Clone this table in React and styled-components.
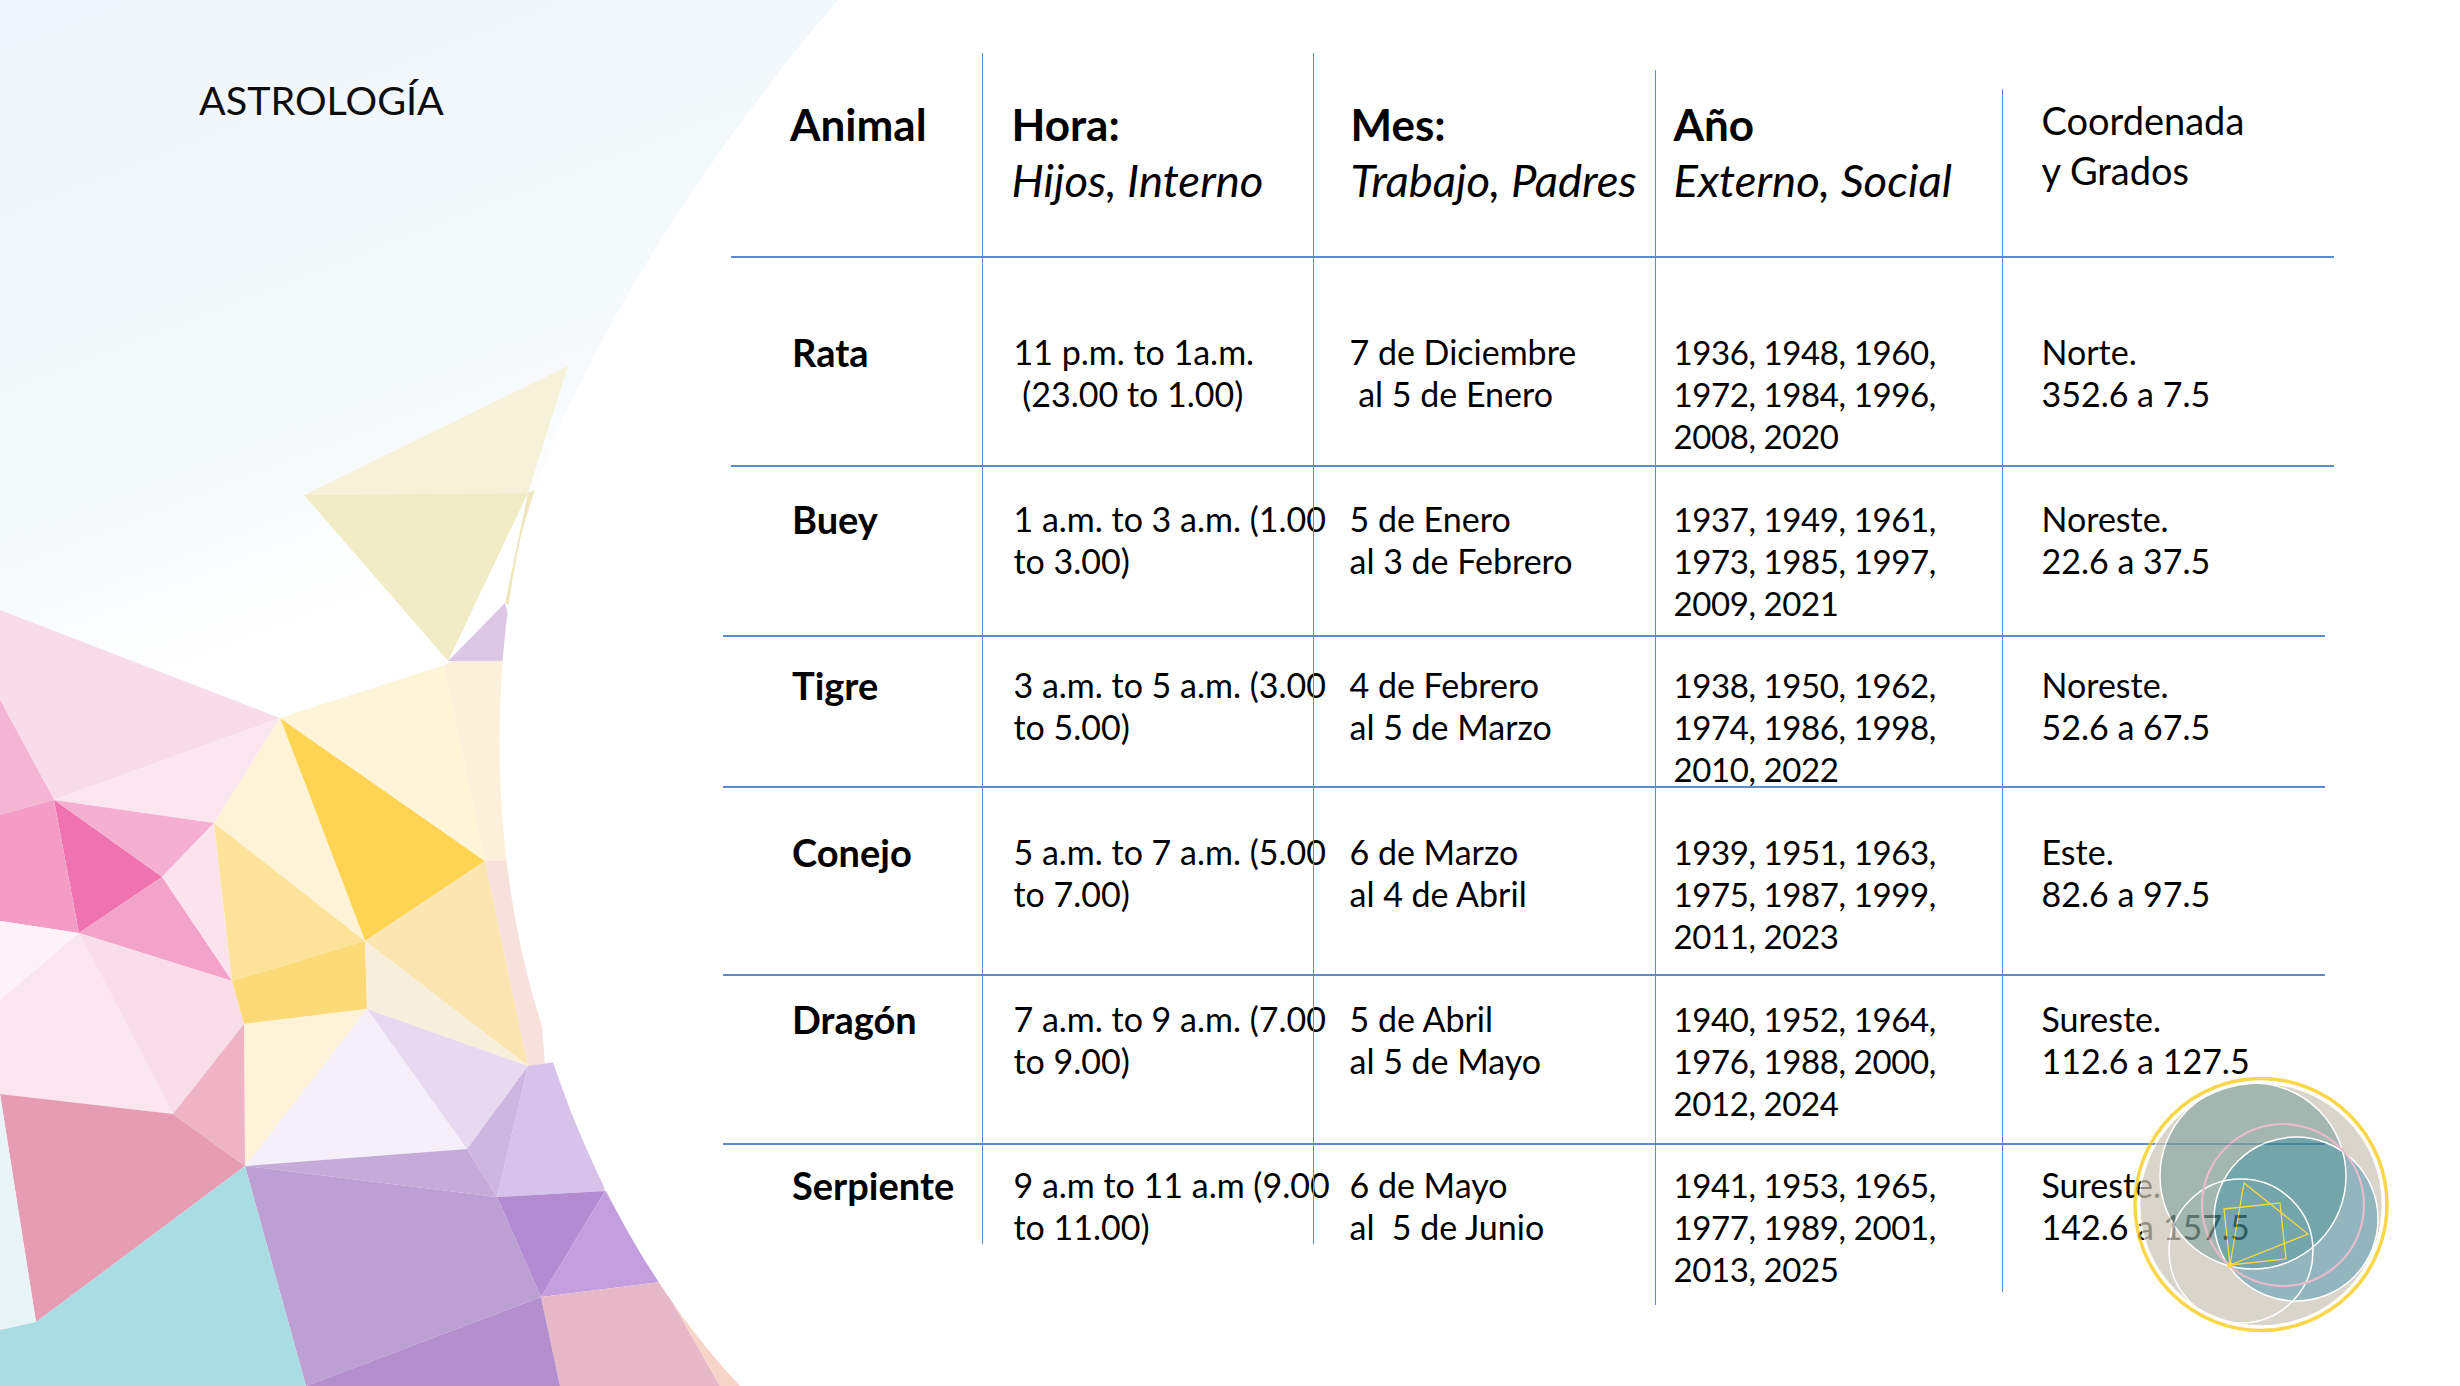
import React from 'react';
import styled, { createGlobalStyle } from 'styled-components';

const GlobalStyle = createGlobalStyle`
  html, body {
    margin: 0;
    padding: 0;
    background: #fff;
  }
  body {
    font-family: Lato, "Open Sans", sans-serif;
    color: #000;
  }
`;

const LINE = '#5b8bd0';
const COLUMNS = '259px 331px 342px 347px 333px';

const Slide = styled.div`
  position: relative;
  width: 2460px;
  height: 1386px;
  overflow: hidden;
  background: #fff;
  display: flex;
  align-items: flex-start;
  padding-left: 199px;
  box-sizing: border-box;
`;

const Backdrop = styled.svg`
  position: absolute;
  left: 0;
  top: 0;
  z-index: 0;
`;

const TitleColumn = styled.div`
  position: relative;
  z-index: 1;
  width: 524px;
  flex-shrink: 0;
  padding-top: 75px;
`;

const Title = styled.h1`
  margin: 0;
  font-family: Lato, sans-serif;
  font-weight: 400;
  font-size: 39.5px;
  line-height: 49px;
  color: #0d0d0d;
`;

const Table = styled.div`
  position: relative;
  z-index: 1;
  margin-top: 53px;
  width: 1612px;
  display: flex;
  flex-direction: column;
`;

const Row = styled.div`
  display: grid;
  grid-template-columns: ${COLUMNS};
  grid-template-rows: 100%;
  height: ${p => p.$h}px;
`;

const Rule = styled.div`
  height: 1.5px;
  background: ${LINE};
  margin-left: ${p => p.$l}px;
  margin-right: ${p => p.$r}px;
`;

const Cell = styled.div`
  box-sizing: border-box;
  min-width: 0;
  padding-top: ${p => p.$pt}px;
  padding-left: ${p => p.$pl}px;
  margin-top: ${p => p.$mt || 0}px;
  border-left: ${p => (p.$first ? 'none' : `1.5px solid ${LINE}`)};
  white-space: pre;
  ${p => p.$h && `align-self: start; height: ${p.$h}px;`}
`;

const HeadLabel = styled.div`
  font-weight: 700;
  font-size: 44px;
  line-height: 56px;
`;

const HeadNote = styled.div`
  font-style: italic;
  font-size: 45.5px;
  line-height: 56px;
`;

const CoordHead = styled.div`
  font-size: 38px;
  line-height: 50px;
`;

const Name = styled.div`
  font-weight: 700;
  font-size: 38px;
  line-height: 42px;
`;

const Body = styled.div`
  font-size: 34px;
  line-height: 42px;
`;

const Years = styled(Body)`
  font-size: 33px;
  letter-spacing: -0.4px;
`;

const Logo = styled.svg`
  position: absolute;
  left: 2133px;
  top: 1077px;
  z-index: 2;
  opacity: 0.72;
`;

const PAD = { name: 69, hora: 30.5, mes: 35.5, ano: 17.5, coord: 38.5 };

const ROWS = [
  {
    name: 'Rata', h: 207.5, pt: 73,
    hora: ['11 p.m. to 1a.m.', ' (23.00 to 1.00)'],
    mes: ['7 de Diciembre', ' al 5 de Enero'],
    ano: ['1936, 1948, 1960,', '1972, 1984, 1996,', '2008, 2020'],
    coord: ['Norte.', '352.6 a 7.5'],
  },
  {
    name: 'Buey', h: 168.5, pt: 31,
    hora: ['1 a.m. to 3 a.m. (1.00', 'to 3.00)'],
    mes: ['5 de Enero', 'al 3 de Febrero'],
    ano: ['1937, 1949, 1961,', '1973, 1985, 1997,', '2009, 2021'],
    coord: ['Noreste.', '22.6 a 37.5'],
  },
  {
    name: 'Tigre', h: 149.5, pt: 27.5,
    hora: ['3 a.m. to 5 a.m. (3.00', 'to 5.00)'],
    mes: ['4 de Febrero', 'al 5 de Marzo'],
    ano: ['1938, 1950, 1962,', '1974, 1986, 1998,', '2010, 2022'],
    coord: ['Noreste.', '52.6 a 67.5'],
  },
  {
    name: 'Conejo', h: 186.5, pt: 43,
    hora: ['5 a.m. to 7 a.m. (5.00', 'to 7.00)'],
    mes: ['6 de Marzo', 'al 4 de Abril'],
    ano: ['1939, 1951, 1963,', '1975, 1987, 1999,', '2011, 2023'],
    coord: ['Este.', '82.6 a 97.5'],
  },
  {
    name: 'Dragón', h: 167.5, pt: 22,
    hora: ['7 a.m. to 9 a.m. (7.00', 'to 9.00)'],
    mes: ['5 de Abril', 'al 5 de Mayo'],
    ano: ['1940, 1952, 1964,', '1976, 1988, 2000,', '2012, 2024'],
    coord: ['Sureste.', '112.6 a 127.5'],
  },
  {
    name: 'Serpiente', h: 160, pt: 19, ends: [99, 99, 160, 147],
    hora: ['9 a.m to 11 a.m (9.00', 'to 11.00)'],
    mes: ['6 de Mayo', 'al  5 de Junio'],
    ano: ['1941, 1953, 1965,', '1977, 1989, 2001,', '2013, 2025'],
    coord: ['Sureste.', '142.6 a 157.5'],
  },
];

// rule insets after header and each row
const RULES = [[8, 1], [8, 1], [0, 10], [0, 10], [0, 10], [0, 10]];

const FACETS = [
  ['M0 610 L280 718 L54 800 L0 800 Z', '#f9dcea'],
  ['M0 700 L54 800 L0 815 Z', '#f4b5d2'],
  ['M54 800 L280 718 L214 823 Z', '#fbe6f0'],
  ['M54 800 L214 823 L162 877 Z', '#f5afd0'],
  ['M54 800 L162 877 L79 933 Z', '#ee73ae'],
  ['M0 815 L54 800 L79 933 L0 921 Z', '#f29cc6'],
  ['M162 877 L214 823 L232 981 Z', '#fbe3ee'],
  ['M79 933 L162 877 L232 981 Z', '#f3a2ca'],
  ['M0 921 L79 933 L0 1000 Z', '#fdf2f7'],
  ['M79 933 L232 981 L244 1024 L173 1114 Z', '#f9dde8'],
  ['M0 1000 L79 933 L173 1114 L0 1094 Z', '#fbe5ee'],
  ['M280 718 L485 861 L365 941 Z', '#ffd452'],
  ['M214 823 L280 718 L365 941 Z', '#fef3d6'],
  ['M214 823 L365 941 L232 981 Z', '#fde39a'],
  ['M232 981 L365 941 L367 1009 L244 1024 Z', '#fdda78'],
  ['M280 718 L444 665 L485 861 Z', '#fef4d8'],
  ['M444 665 L520 630 L530 880 L485 861 Z', '#fdf0da'],
  ['M365 941 L485 861 L528 1066 Z', '#fbe6b2'],
  ['M485 861 L530 860 L545 1066 L528 1066 Z', '#f8e1dc'],
  ['M365 941 L528 1066 L367 1009 Z', '#f8eedc'],
  ['M244 1024 L367 1009 L245 1166 Z', '#fef2d8'],
  ['M367 1009 L467 1149 L245 1166 Z', '#f4eff8'],
  ['M367 1009 L528 1066 L467 1149 Z', '#e6d9f0'],
  ['M528 1066 L570 1060 L605 1191 L497 1197 Z', '#d7c3ea'],
  ['M467 1149 L528 1066 L497 1197 Z', '#cdb6e0'],
  ['M245 1166 L467 1149 L497 1197 Z', '#c5abda'],
  ['M245 1166 L497 1197 L541 1297 L306 1386 Z', '#bc9fd3'],
  ['M497 1197 L605 1191 L541 1297 Z', '#b28bd1'],
  ['M605 1191 L661 1282 L541 1297 Z', '#c39fe0'],
  ['M605 1191 L640 1180 L700 1282 L661 1282 Z', '#d3b6e8'],
  ['M541 1297 L661 1282 L720 1386 L560 1386 Z', '#e7b9c8'],
  ['M661 1282 L720 1282 L780 1386 L720 1386 Z', '#f6d5c8'],
  ['M306 1386 L541 1297 L560 1386 Z', '#b48fcd'],
  ['M0 1094 L173 1114 L245 1166 L36 1322 Z', '#e69cb3'],
  ['M173 1114 L244 1024 L245 1166 Z', '#eeb3c5'],
  ['M0 1094 L36 1322 L0 1330 Z', '#e9f4f6'],
  ['M36 1322 L245 1166 L306 1386 L0 1386 L0 1330 Z', '#a9dce3'],
  ['M304 495 L568 366 L528 493 Z', '#f6f2da'],
  ['M304 495 L528 493 L448 661 Z', '#f2ecc6'],
  ['M528 493 L560 480 L520 610 L505 603 Z', '#efe6bd'],
  ['M448 661 L505 603 L520 661 Z', '#dcc8e6'],
];

function Background() {
  return (
    <Backdrop width="2460" height="1386" viewBox="0 0 2460 1386">
      <defs>
        <linearGradient id="sky" x1="0" y1="0" x2="0.25" y2="1">
          <stop offset="0" stopColor="#eef5fa" />
          <stop offset="0.4" stopColor="#f6fafc" />
          <stop offset="0.5" stopColor="#ffffff" />
        </linearGradient>
      </defs>
      <rect x="0" y="0" width="900" height="1386" fill="url(#sky)" />
      {FACETS.map(([d, fill], i) => (
        <path key={i} d={d} fill={fill} />
      ))}
      <path
        d="M838 0 C700 160 560 380 520 540 C490 680 490 860 540 1020 C580 1160 650 1290 740 1386 L2460 1386 L2460 0 Z"
        fill="#fff"
      />
    </Backdrop>
  );
}

function Emblem() {
  return (
    <Logo width="258" height="258" viewBox="0 0 258 258">
      <defs>
        <clipPath id="greenDisc">
          <circle cx="120" cy="99" r="93" />
        </clipPath>
      </defs>
      <circle cx="128" cy="128" r="121" fill="#cbc5b7" />
      <circle cx="120" cy="99" r="93" fill="#819c93" />
      <circle cx="163" cy="142" r="82" fill="#6a9aa6" />
      <circle cx="163" cy="142" r="82" fill="#3e838a" clipPath="url(#greenDisc)" />
      <circle cx="120" cy="99" r="93" fill="none" stroke="#fff" strokeWidth="1.5" />
      <circle cx="163" cy="142" r="82" fill="none" stroke="#fff" strokeWidth="1.5" />
      <circle cx="108" cy="174" r="72" fill="none" stroke="#fff" strokeWidth="1.5" />
      <circle cx="150" cy="128" r="81" fill="none" stroke="#dfa2b7" strokeWidth="2.2" />
      <path d="M97 188 L111 106 L175 157 Z" fill="none" stroke="#f7c904" strokeWidth="1.3" />
      <path d="M91 132 L147 126 L153 182 L97 188 Z" fill="none" stroke="#f7c904" strokeWidth="1.3" />
      <circle cx="97" cy="188" r="3" fill="#f7c904" />
      <circle cx="128" cy="127.5" r="121.5" fill="none" stroke="#fff" strokeWidth="1.5" />
      <circle cx="128" cy="127.5" r="126" fill="none" stroke="#f7c904" strokeWidth="3.5" />
    </Logo>
  );
}

function Lines({ as: Text, lines }) {
  return lines.map((line, i) => <Text key={i}>{line}</Text>);
}

export default function App() {
  return (
    <Slide>
      <GlobalStyle />
      <Background />
      <TitleColumn>
        <Title>ASTROLOGÍA</Title>
      </TitleColumn>
      <Table>
        <Row $h={203}>
          <Cell $first $pt={43} $pl={67}>
            <HeadLabel>Animal</HeadLabel>
          </Cell>
          <Cell $pt={43} $pl={28.5}>
            <HeadLabel>Hora:</HeadLabel>
            <HeadNote>Hijos, Interno</HeadNote>
          </Cell>
          <Cell $pt={43} $pl={36.5}>
            <HeadLabel>Mes:</HeadLabel>
            <HeadNote>Trabajo, Padres</HeadNote>
          </Cell>
          <Cell $mt={17} $pt={26} $pl={17.5}>
            <HeadLabel>Año</HeadLabel>
            <HeadNote>Externo, Social</HeadNote>
          </Cell>
          <Cell $mt={36} $pt={6} $pl={38.5}>
            <CoordHead>Coordenada</CoordHead>
            <CoordHead>y Grados</CoordHead>
          </Cell>
        </Row>
        {ROWS.map((row, i) => {
          const ends = row.ends || [];
          return (
            <React.Fragment key={row.name}>
              <Rule $l={RULES[i][0]} $r={RULES[i][1]} />
              <Row $h={row.h}>
                <Cell $first $pt={row.pt} $pl={PAD.name}>
                  <Name>{row.name}</Name>
                </Cell>
                <Cell $pt={row.pt} $pl={PAD.hora} $h={ends[0]}>
                  <Lines as={Body} lines={row.hora} />
                </Cell>
                <Cell $pt={row.pt} $pl={PAD.mes} $h={ends[1]}>
                  <Lines as={Body} lines={row.mes} />
                </Cell>
                <Cell $pt={row.pt} $pl={PAD.ano} $h={ends[2]}>
                  <Lines as={Years} lines={row.ano} />
                </Cell>
                <Cell $pt={row.pt} $pl={PAD.coord} $h={ends[3]}>
                  <Lines as={Body} lines={row.coord} />
                </Cell>
              </Row>
            </React.Fragment>
          );
        })}
      </Table>
      <Emblem />
    </Slide>
  );
}
